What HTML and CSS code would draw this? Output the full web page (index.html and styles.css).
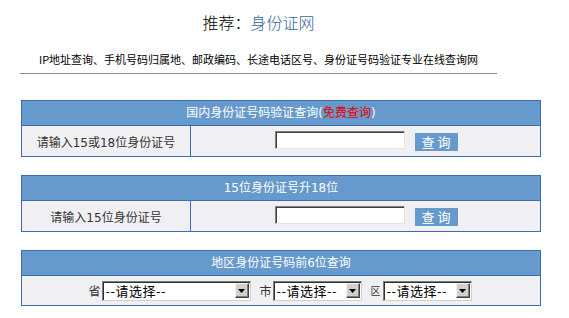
FILE: index.html
```html
<!DOCTYPE html>
<html lang="zh-CN">
<head>
<meta charset="utf-8">
<title>身份证号码验证查询</title>
<link rel="stylesheet" href="styles.css">
</head>
<body>
<div class="top">
  <div class="title">推荐：<a class="site" href="#">身份证网</a></div>
  <div class="sub">IP地址查询、手机号码归属地、邮政编码、长途电话区号、身份证号码验证专业在线查询网</div>
  <div class="rule"></div>
</div>

<div class="boxes">
  <div class="box">
    <div class="head">国内身份证号码验证查询(<span class="free">免费查询</span>)</div>
    <div class="row">
      <div class="label">请输入15或18位身份证号</div>
      <div class="field"><span class="input"></span><span class="btn">查 询</span></div>
    </div>
  </div>

  <div class="box">
    <div class="head">15位身份证号升18位</div>
    <div class="row">
      <div class="label">请输入15位身份证号</div>
      <div class="field"><span class="input"></span><span class="btn">查 询</span></div>
    </div>
  </div>

  <div class="box">
    <div class="head">地区身份证号码前6位查询</div>
    <div class="row single">
      <span class="lab">省</span>
      <span class="sel wide"><span class="val">--请选择--</span><span class="arrow"><svg width="7" height="4" viewBox="0 0 7 4"><path d="M0 0H7L3.5 4Z" fill="#000"/></svg></span></span>
      <span class="lab gap">市</span>
      <span class="sel"><span class="val">--请选择--</span><span class="arrow"><svg width="7" height="4" viewBox="0 0 7 4"><path d="M0 0H7L3.5 4Z" fill="#000"/></svg></span></span>
      <span class="lab gap small">区</span>
      <span class="sel"><span class="val">--请选择--</span><span class="arrow"><svg width="7" height="4" viewBox="0 0 7 4"><path d="M0 0H7L3.5 4Z" fill="#000"/></svg></span></span>
    </div>
  </div>
</div>
</body>
</html>
```

FILE: styles.css
```css
* { box-sizing: border-box; }
body {
  margin: 0;
  background: #fff;
  font-family: "DejaVu Sans", "Noto Sans CJK SC", sans-serif;
  color: #000;
}
.top {
  width: 477px;
  margin-left: 20px;
  text-align: center;
}
.title {
  font-family: "Noto Sans CJK SC", sans-serif;
  font-size: 16px;
  font-weight: 300;
  line-height: 22px;
  padding-top: 11px;
}
.site {
  color: #336699;
  text-decoration: none;
}
.sub {
  font-family: "Noto Sans CJK SC", sans-serif;
  font-size: 11px;
  line-height: 16px;
  margin-top: 18px;
}
.rule {
  height: 1px;
  background: #8a8a8a;
  margin-top: 6px;
}
.boxes {
  margin-top: 26px;
  margin-left: 21px;
  width: 520px;
  display: flex;
  flex-direction: column;
  gap: 18px;
}
.box {
  border: 1px solid #3d6cb3;
  background: #f0f0f3;
}
.head {
  height: 25px;
  background: #6699cc;
  border-bottom: 1px solid #3d6cb3;
  color: #fff;
  font-size: 12px;
  line-height: 24px;
  text-align: center;
}
.free { color: #e80000; }
.row {
  display: grid;
  grid-template-columns: 169px 1fr;
  height: 30px;
}
.label {
  border-right: 1px solid #3d6cb3;
  font-size: 12px;
  color: #333;
  display: flex;
  align-items: center;
  justify-content: center;
}
.field {
  display: flex;
  align-items: center;
  justify-content: center;
  gap: 10px;
  padding-left: 1px;
}
.input {
  width: 130px;
  height: 18px;
  background: #fff;
  border: 1px solid;
  border-color: #808080 #e4e4e4 #e4e4e4 #808080;
  box-shadow: inset 1px 1px 0 #404040;
  margin-bottom: 2px;
}
.btn {
  width: 43px;
  height: 18px;
  background: #6699cc;
  color: #fff;
  font-family: "Noto Sans CJK SC", sans-serif;
  font-size: 13px;
  line-height: 18px;
  text-align: center;
  margin-top: 2px;
}
.row.single {
  display: flex;
  align-items: center;
  justify-content: center;
  height: 29px;
  padding-right: 2px;
}
.lab {
  font-family: "Noto Sans CJK SC", sans-serif;
  font-size: 12px;
  color: #333;
  line-height: 19px;
  margin-right: 1px;
}
.lab.gap { margin-left: 9px; }
.lab.small {
  font-size: 10px;
  align-self: flex-end;
  margin-bottom: 5px;
  margin-right: 2px;
}
.sel {
  display: inline-flex;
  align-items: center;
  width: 89px;
  height: 20px;
  background: #fff;
  border: 1px solid;
  border-color: #7a7a7a #d0d0d0 #d0d0d0 #7a7a7a;
  box-shadow: inset 1px 1px 0 #303030;
  padding: 1px 1px 1px 2px;
}
.sel.wide { width: 149px; }
.val {
  flex: 1;
  font-family: "Noto Sans CJK SC", sans-serif;
  font-size: 13px;
  letter-spacing: 0.5px;
  line-height: 17px;
  color: #000;
  padding-left: 1px;
  white-space: nowrap;
}
.arrow {
  width: 14px;
  height: 15px;
  background: #d4d0c8;
  border: 1px solid;
  border-color: #f4f4f4 #404040 #404040 #f4f4f4;
  box-shadow: inset -1px -1px 0 #808080;
  display: flex;
  align-items: center;
  justify-content: center;
}
```
